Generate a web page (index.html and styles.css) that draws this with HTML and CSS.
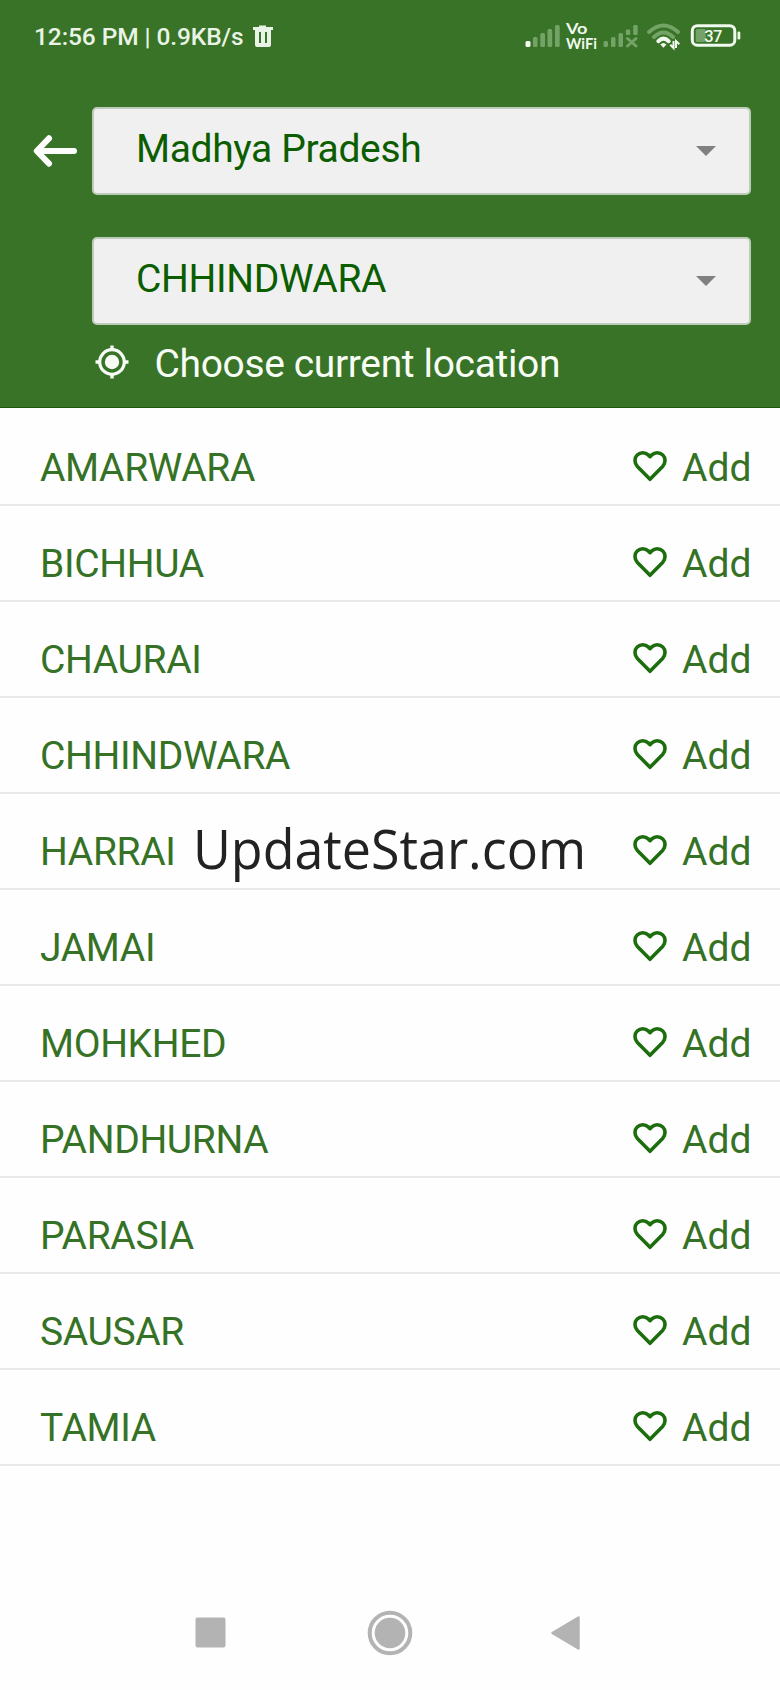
FILE: index.html
```html
<!DOCTYPE html>
<html lang="en">
<head>
<meta charset="utf-8">
<title>Choose location</title>
<link rel="stylesheet" href="styles.css">
</head>
<body>
<svg class="defs" width="0" height="0" aria-hidden="true">
  <symbol id="heart" viewBox="0 0 36 32"><path d="M18 29.3L5.4 16.6C2.2 13.2 2.2 7.8 5.2 5C8.4 2 13.2 2 16.2 4.9L18 6.6L19.8 4.9C22.8 2 27.6 2 30.8 5C33.8 7.8 33.8 13.2 30.6 16.6Z" fill="none" stroke="#1c6e0c" stroke-width="3.6" stroke-linejoin="round"/></symbol>
</svg>
<header class="header">
  <div class="status">
    <span class="clock">12:56 PM | 0.9KB/s</span>
    <svg class="trash" width="22" height="23" viewBox="0 0 22 23"><path fill="#e9f3e6" fill-rule="evenodd" d="M1 2H7V.5H14V2H21V5H19V20Q19 22 17 22H5Q3 22 3 20V5H1ZM7 7V18H9V7ZM13 7V18H15V7Z"/></svg>
    <svg class="indicators" width="222" height="40" viewBox="520 15 222 40">
      <rect x="525.5" y="41" width="5" height="6" rx="1.5" fill="#f0faee"/>
      <g fill="#73a367">
        <rect x="533" y="37" width="4.5" height="10" rx="1.5"/><rect x="540.3" y="33" width="4.7" height="14" rx="1.5"/><rect x="547.5" y="29" width="4.7" height="18" rx="1.5"/><rect x="555" y="25" width="4.7" height="22" rx="1.5"/>
        <rect x="603.5" y="41" width="4.5" height="6" rx="1.5"/><rect x="611" y="37" width="4.5" height="10" rx="1.5"/><rect x="618.5" y="33" width="4.5" height="14" rx="1.5"/><rect x="625.8" y="29.5" width="4.5" height="5.5" rx="1.2"/><rect x="633.2" y="25" width="4.5" height="10" rx="1.2"/>
      </g>
      <path d="M627.5 38.5L636 46M636 38.5L627.5 46" stroke="#73a367" stroke-width="3" stroke-linecap="round"/>
      <text class="vowifi" x="566" y="34" textLength="21.5" lengthAdjust="spacingAndGlyphs">Vo</text>
      <text class="vowifi" x="566" y="49" textLength="31" lengthAdjust="spacingAndGlyphs">WiFi</text>
      <g fill="none" stroke-width="4" stroke-linecap="round">
        <path d="M649 32Q663.5 19 678 32" stroke="#73a367"/>
        <path d="M654 37Q663.5 28 673 37" stroke="#73a367"/>
        <path d="M658.3 41.2Q663.5 36.2 668.7 41.2" stroke="#f0faee"/>
      </g>
      <path d="M660.3 44.5Q663.3 41.5 666.5 44.5L663.4 47.8Z" fill="#f0faee"/>
      <path d="M673.5 41V48L670.3 44.8M676 48V41L679.3 44.2" fill="none" stroke="#f0faee" stroke-width="2"/>
      <rect x="692.3" y="25.7" width="42.5" height="19.5" rx="5" fill="none" stroke="#f0faee" stroke-width="3"/>
      <rect x="695.7" y="29" width="10" height="13" rx="1.5" fill="#73a367"/>
      <rect x="737.5" y="31.5" width="2.8" height="8" rx="1.3" fill="#f0faee"/>
      <text class="battery" x="704.3" y="41.6" textLength="18">37</text>
    </svg>
  </div>
  <div class="picker">
    <svg class="back" width="46" height="34" viewBox="0 0 46 34"><path d="M18 4.3L5.8 17L18 29.7M6 17H43" fill="none" stroke="#fff" stroke-width="6" stroke-linecap="round" stroke-linejoin="round"/></svg>
    <div class="fields">
      <div class="select"><span class="state">Madhya Pradesh</span><i class="caret"></i></div>
      <div class="select"><span class="district">CHHINDWARA</span><i class="caret"></i></div>
      <div class="current">
        <svg width="34" height="34" viewBox="0 0 34 34"><circle cx="17" cy="17" r="12.3" fill="none" stroke="#f7fcf5" stroke-width="3.2"/><circle cx="17" cy="17" r="7.2" fill="#f7fcf5"/><path d="M17 .5V5M17 29V33.5M.5 17H5M29 17H33.5" stroke="#f7fcf5" stroke-width="3.4"/></svg>
        <span>Choose current location</span>
      </div>
    </div>
  </div>
</header>
<main class="list">
  <div class="row"><span>AMARWARA</span><svg class="heart"><use href="#heart"/></svg><span class="add">Add</span></div>
  <div class="row"><span>BICHHUA</span><svg class="heart"><use href="#heart"/></svg><span class="add">Add</span></div>
  <div class="row"><span>CHAURAI</span><svg class="heart"><use href="#heart"/></svg><span class="add">Add</span></div>
  <div class="row"><span>CHHINDWARA</span><svg class="heart"><use href="#heart"/></svg><span class="add">Add</span></div>
  <div class="row"><span>HARRAI</span><svg class="heart"><use href="#heart"/></svg><span class="add">Add</span>
    <svg class="watermark" width="400" height="90" viewBox="0 0 400 90"><text x="0" y="65" textLength="393" lengthAdjust="spacingAndGlyphs">UpdateStar.com</text></svg>
  </div>
  <div class="row"><span>JAMAI</span><svg class="heart"><use href="#heart"/></svg><span class="add">Add</span></div>
  <div class="row"><span>MOHKHED</span><svg class="heart"><use href="#heart"/></svg><span class="add">Add</span></div>
  <div class="row"><span>PANDHURNA</span><svg class="heart"><use href="#heart"/></svg><span class="add">Add</span></div>
  <div class="row"><span>PARASIA</span><svg class="heart"><use href="#heart"/></svg><span class="add">Add</span></div>
  <div class="row"><span>SAUSAR</span><svg class="heart"><use href="#heart"/></svg><span class="add">Add</span></div>
  <div class="row"><span>TAMIA</span><svg class="heart"><use href="#heart"/></svg><span class="add">Add</span></div>
</main>
<nav class="nav">
  <svg width="46" height="46" viewBox="0 0 46 46"><rect x="8.5" y="7.5" width="30" height="30" rx="2" fill="#b3b3b3"/></svg>
  <svg width="46" height="46" viewBox="0 0 46 46"><circle cx="23" cy="23" r="20.3" fill="none" stroke="#b3b3b3" stroke-width="4"/><circle cx="23" cy="23" r="15.3" fill="#b3b3b3"/></svg>
  <svg width="46" height="46" viewBox="0 0 46 46"><path d="M5.5 23L31.5 7.5V38.5Z" fill="#b3b3b3" stroke="#b3b3b3" stroke-width="2.5" stroke-linejoin="round"/></svg>
</nav>
</body>
</html>
```
FILE: styles.css
```css
* { box-sizing: border-box; }
body {
  margin: 0;
  width: 780px;
  height: 1690px;
  display: flex;
  flex-direction: column;
  background: #fefefe;
  color: #357225;
  font: 39px Roboto, sans-serif;
  letter-spacing: -0.36px;
  overflow: hidden;
}
svg { flex: none; display: block; letter-spacing: 0; }
.defs { position: absolute; }
.header {
  height: 408px;
  background: #397327;
  border-bottom: 1px solid #1f550e;
}
.status {
  height: 72px;
  padding: 0 38px 0 34px;
  display: flex;
  align-items: center;
}
.clock {
  width: 217.5px;
  color: #e9f3e6;
  font-size: 24.5px;
  font-weight: 500;
  letter-spacing: -0.1px;
  white-space: nowrap;
}
.indicators { margin: 0 0 2px auto; }
.vowifi { font: 700 15.5px Lato, sans-serif; fill: #f0faee; }
.battery { font: 500 16.5px Roboto, sans-serif; fill: #f0faee; }
.picker { display: flex; padding: 35px 29px 0 31px; }
.back { margin: 27px 14.5px 0 0; }
.fields { flex: 1; display: flex; flex-direction: column; }
.select {
  height: 88px;
  margin-bottom: 41.5px;
  padding: 0 33px 4px 42.5px;
  display: flex;
  align-items: center;
  justify-content: space-between;
  color: #0b5d00;
  background: #f0f0f0;
  border: 2px solid #bdcbb8;
  border-radius: 5px;
}
.select + .select { margin-bottom: 14px; }
.caret {
  margin-top: 4px;
  border: 10px solid transparent;
  border-top-color: #808080;
  border-bottom: 0;
}
.current {
  height: 50px;
  padding-left: 3px;
  display: flex;
  align-items: center;
  gap: 26px;
  color: #f7fcf5;
}
.current svg { margin-bottom: 4px; }
.list { padding-top: 2px; height: 1106px; }
.row {
  position: relative;
  height: 96px;
  padding: 21px 30px 0 40px;
  display: flex;
  align-items: center;
  border-bottom: 2px solid #e8e8e8;
}
.heart { width: 36px; height: 32px; margin: 0 14px 3px auto; }
.add { width: 68px; letter-spacing: 0; }
.watermark { position: absolute; left: 193px; top: 9.5px; overflow: visible; }
.watermark text { font: 55.5px "Open Sans", sans-serif; fill: #222; }
.nav {
  flex: 1;
  padding: 95.5px 187px 0;
  display: flex;
  justify-content: space-between;
}
```
